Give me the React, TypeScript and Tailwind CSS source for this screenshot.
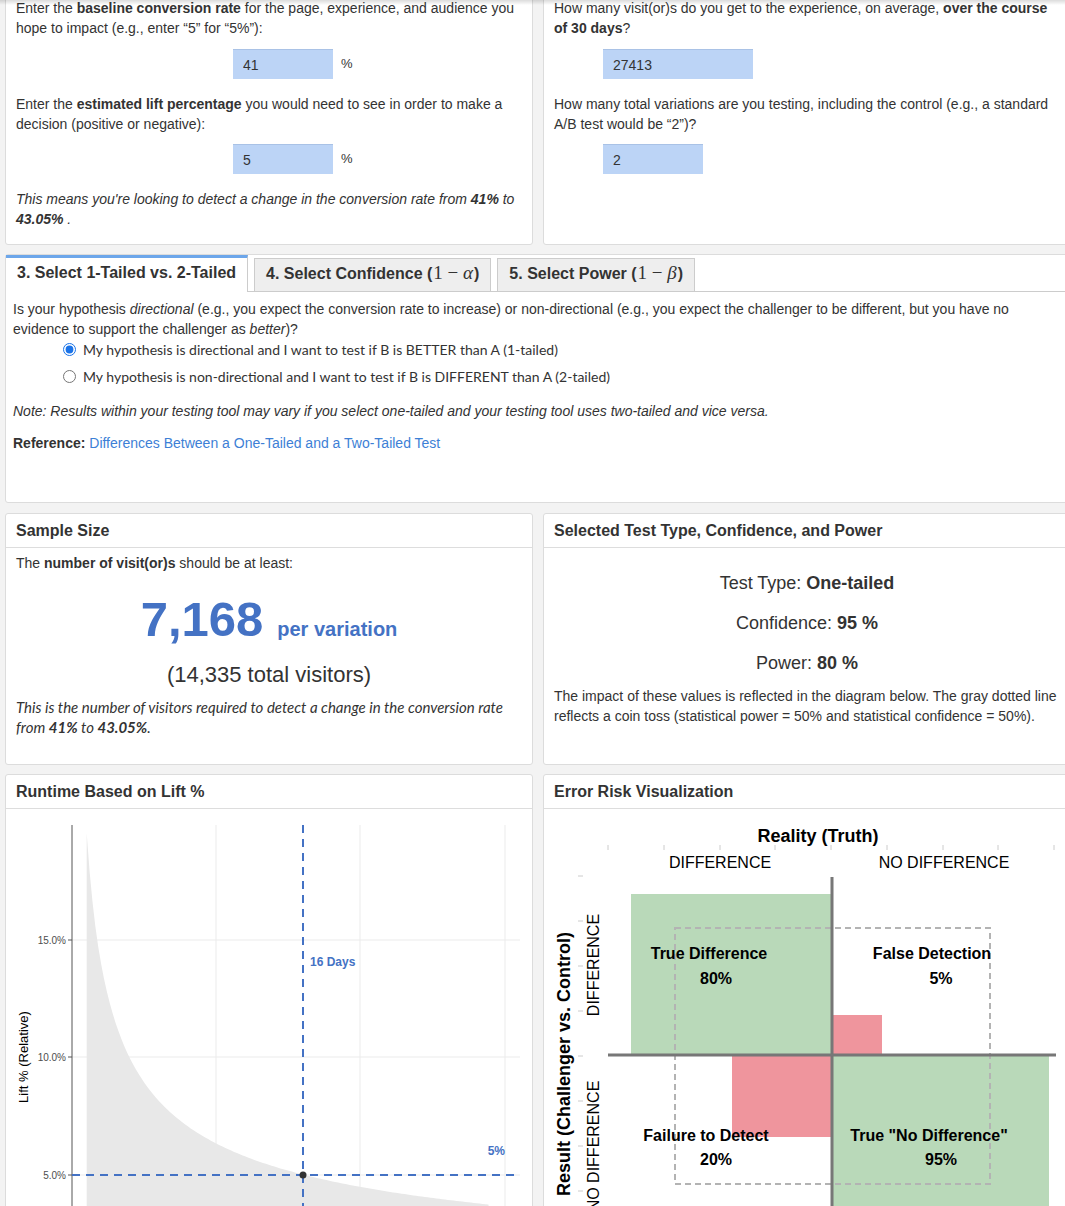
import React from 'react'

const card = 'bg-white border border-[#dcdcdc] rounded-[3px]'

function Field({ value, width }: { value: string; width: string }) {
  return (
    <input
      readOnly
      value={value}
      className={`${width} h-[30px] bg-[#bcd4f6] border-t border-[#a9c2e6] px-[10px] text-[14px] text-[#333] outline-none`}
    />
  )
}

function Header({ children }: { children: React.ReactNode }) {
  return (
    <div className="h-[34px] flex items-center px-[10px] border-b border-[#ddd] text-[16px] font-bold text-[#333]">
      {children}
    </div>
  )
}

function RuntimeChart() {
  const pts: string[] = []
  for (let d = 1.05; d <= 28.96; d += 0.2) {
    const x = 71.5 + 14.45 * d
    const y = 1292 - 23.5 * (20 / Math.sqrt(d))
    pts.push(`${x.toFixed(1)},${y.toFixed(1)}`)
  }
  const area = `M 86.7 1215 L ${pts.join(' L ')} L 490 1215 Z`
  return (
    <svg width="526" height="400" viewBox="6 809 526 400" className="block font-['Liberation_Sans']">
      {[940, 1057, 1175].map((y) => (
        <line key={y} x1="72" x2="520" y1={y} y2={y} stroke="#ebebeb" strokeWidth="1" />
      ))}
      {[216, 360, 505].map((x) => (
        <line key={x} x1={x} x2={x} y1="825" y2="1215" stroke="#ebebeb" strokeWidth="1" />
      ))}
      <path d={area} fill="#e8e8e8" />
      <line x1="72" x2="72" y1="825" y2="1215" stroke="#555" strokeWidth="1" />
      {[
        [940, '15.0%'],
        [1057, '10.0%'],
        [1175, '5.0%'],
      ].map(([y, t]) => (
        <g key={t as string}>
          <line x1="68" x2="72" y1={y} y2={y} stroke="#555" strokeWidth="1" />
          <text x="66" y={(y as number) + 3.5} fontSize="10" fill="#4d4d4d" textAnchor="end">
            {t}
          </text>
        </g>
      ))}
      <line x1="303" x2="303" y1="825" y2="1215" stroke="#4472c4" strokeWidth="2" strokeDasharray="8 6" />
      <line x1="72" x2="520" y1="1175" y2="1175" stroke="#4472c4" strokeWidth="2" strokeDasharray="8 6" />
      <circle cx="303" cy="1175" r="3.5" fill="#333" />
      <text x="310" y="966" fontSize="12" fontWeight="bold" fill="#4472c4">
        16 Days
      </text>
      <text x="505" y="1155" fontSize="12" fontWeight="bold" fill="#4472c4" textAnchor="end">
        5%
      </text>
      <text x="25" y="1057" fontSize="13" fill="#000" textAnchor="middle" dominantBaseline="middle" transform="rotate(-90 25 1057)">
        Lift % (Relative)
      </text>
    </svg>
  )
}

function ErrorChart() {
  const topTicks = [608, 664, 720, 775, 831, 887, 943, 998, 1054]
  const leftTicks = [876, 921, 966, 1011, 1056, 1101, 1146, 1191]
  return (
    <svg width="526" height="400" viewBox="544 809 526 400" className="block font-['Liberation_Sans']">
      {topTicks.map((x) => (
        <line key={x} x1={x} x2={x} y1="845" y2="850" stroke="#ccc" strokeWidth="1" />
      ))}
      {leftTicks.map((y) => (
        <line key={y} x1="578" x2="583" y1={y} y2={y} stroke="#ccc" strokeWidth="1" />
      ))}
      <text x="818" y="842" fontSize="18" fontWeight="bold" fill="#000" textAnchor="middle">
        Reality (Truth)
      </text>
      <text x="720" y="868" fontSize="16" fill="#000" textAnchor="middle">
        DIFFERENCE
      </text>
      <text x="944" y="868" fontSize="16" fill="#000" textAnchor="middle">
        NO DIFFERENCE
      </text>
      <rect x="631" y="894" width="201" height="161" fill="#b9d9b9" />
      <rect x="832" y="1055" width="217" height="160" fill="#b9d9b9" />
      <rect x="832" y="1015" width="50" height="40" fill="#ef959d" />
      <rect x="732" y="1055" width="100" height="82" fill="#ef959d" />
      <rect x="675" y="928" width="315" height="256" fill="none" stroke="#b3b3b3" strokeWidth="2" strokeDasharray="6 4" />
      <line x1="832" x2="832" y1="877" y2="1215" stroke="#777" strokeWidth="3" />
      <line x1="608" x2="1056" y1="1055" y2="1055" stroke="#777" strokeWidth="3" />
      <g fontSize="16" fontWeight="bold" fill="#000" textAnchor="middle">
        <text x="709" y="959">True Difference</text>
        <text x="716" y="984">80%</text>
        <text x="932" y="959">False Detection</text>
        <text x="941" y="984">5%</text>
        <text x="706" y="1141">Failure to Detect</text>
        <text x="716" y="1165">20%</text>
        <text x="929" y="1141">True "No Difference"</text>
        <text x="941" y="1165">95%</text>
      </g>
      <text x="565" y="1064" fontSize="18" fontWeight="bold" fill="#000" textAnchor="middle" dominantBaseline="middle" transform="rotate(-90 565 1064)">
        Result (Challenger vs. Control)
      </text>
      <text x="595" y="965" fontSize="16" fill="#000" textAnchor="middle" dominantBaseline="middle" transform="rotate(-90 595 965)">
        DIFFERENCE
      </text>
      <text x="595" y="1146" fontSize="16" fill="#000" textAnchor="middle" dominantBaseline="middle" transform="rotate(-90 595 1146)">
        NO DIFFERENCE
      </text>
    </svg>
  )
}

export default function App() {
  return (
    <div className="relative w-[1065px] h-[1206px] overflow-hidden bg-[#f3f3f3] font-['Liberation_Sans',Arial,sans-serif] text-[#333]">
      <div className="w-[1076px] px-[5px] -mt-[13px] grid grid-cols-[528px_528px] gap-x-[10px]">
        {/* inputs */}
        <div className={`${card} px-[10px] pt-[10px] pb-[15px] text-[14px] leading-[20px]`}>
          <p>
            Enter the <b>baseline conversion rate</b> for the page, experience, and audience you hope to impact (e.g., enter “5” for “5%”):
          </p>
          <div className="mt-[11px] ml-[217px] flex items-center gap-[8px]">
            <Field value="41" width="w-[100px]" />
            <span className="text-[13px]">%</span>
          </div>
          <p className="mt-[15px]">
            Enter the <b>estimated lift percentage</b> you would need to see in order to make a decision (positive or negative):
          </p>
          <div className="mt-[10px] ml-[217px] flex items-center gap-[8px]">
            <Field value="5" width="w-[100px]" />
            <span className="text-[13px]">%</span>
          </div>
          <p className="mt-[15px] italic">
            This means you're looking to detect a change in the conversion rate from <b>41%</b> to <b>43.05%</b> .
          </p>
        </div>
        <div className={`${card} px-[10px] pt-[10px] pb-[15px] text-[14px] leading-[20px]`}>
          <p>
            How many visit(or)s do you get to the experience, on average, <b>over the course of 30 days</b>?
          </p>
          <div className="mt-[11px] ml-[49px]">
            <Field value="27413" width="w-[150px]" />
          </div>
          <p className="mt-[15px]">
            How many total variations are you testing, including the control (e.g., a standard A/B test would be “2”)?
          </p>
          <div className="mt-[10px] ml-[49px]">
            <Field value="2" width="w-[100px]" />
          </div>
        </div>

        {/* tabs */}
        <div className={`${card} col-span-2 mt-[9px] h-[249px]`}>
          <div className="flex items-end border-b border-[#ccc] h-[37px]">
            <div className="relative -mb-px h-[37px] bg-white border-t-[3px] border-t-[#6ca6ea] border-r border-r-[#ccc] px-[11px] pb-[4px] flex items-center text-[16px] font-bold">
              3. Select 1-Tailed vs. 2-Tailed
            </div>
            <div className="ml-[6px] h-[33px] bg-[#eee] border border-b-0 border-[#ccc] px-[11px] pb-[3px] flex items-center text-[16px] font-bold">
              4. Select Confidence (<span className="font-['Liberation_Serif',serif] font-normal text-[19px] mx-[1px]">1 − <i>α</i></span>)
            </div>
            <div className="ml-[6px] h-[33px] bg-[#eee] border border-b-0 border-[#ccc] px-[11px] pb-[3px] flex items-center text-[16px] font-bold">
              5. Select Power (<span className="font-['Liberation_Serif',serif] font-normal text-[19px] mx-[1px]">1 − <i>β</i></span>)
            </div>
          </div>
          <div className="px-[7px] pt-[7px] text-[14px] leading-[20px]">
            <p>
              Is your hypothesis <i>directional</i> (e.g., you expect the conversion rate to increase) or non-directional (e.g., you expect the challenger to be different, but you have no evidence to support the challenger as <i>better</i>)?
            </p>
            <div className="-mt-[3px] pl-[50px] font-['Lato',sans-serif]">
              <label className="h-[27px] flex items-center gap-[7px]">
                <input type="radio" name="tail" defaultChecked className="m-0 w-[13px] h-[13px] accent-[#1a73e8]" />
                My hypothesis is directional and I want to test if B is BETTER than A (1-tailed)
              </label>
              <label className="h-[27px] flex items-center gap-[7px]">
                <input type="radio" name="tail" className="m-0 w-[13px] h-[13px]" />
                My hypothesis is non-directional and I want to test if B is DIFFERENT than A (2-tailed)
              </label>
            </div>
            <p className="mt-[11px] italic">
              Note: Results within your testing tool may vary if you select one-tailed and your testing tool uses two-tailed and vice versa.
            </p>
            <p className="mt-[12px]">
              <b>Reference:</b> <a className="text-[#3d7fd6]">Differences Between a One-Tailed and a Two-Tailed Test</a>
            </p>
          </div>
        </div>

        {/* results */}
        <div className={`${card} mt-[10px] h-[252px]`}>
          <Header>Sample Size</Header>
          <div className="px-[10px] pt-[5px]">
            <p className="text-[14px] leading-[20px]">
              The <b>number of visit(or)s</b> should be at least:
            </p>
            <div className="mt-[22px] flex justify-center items-baseline gap-[14px] text-[#4472c4] font-bold">
              <span className="text-[49px] leading-none">7,168</span>
              <span className="text-[20px]">per variation</span>
            </div>
            <p className="mt-[16px] text-center text-[22px] leading-[30px]">(14,335 total visitors)</p>
            <p className="mt-[7px] italic font-['Lato',sans-serif] text-[15px] leading-[20px]">
              This is the number of visitors required to detect a change in the conversion rate from <b>41%</b> to <b>43.05%</b>.
            </p>
          </div>
        </div>
        <div className={`${card} mt-[10px] h-[252px]`}>
          <Header>Selected Test Type, Confidence, and Power</Header>
          <div className="px-[10px] pt-[15px]">
            <div className="h-[40px] flex items-center justify-center text-[18px]">
              Test Type:&nbsp;<b>One-tailed</b>
            </div>
            <div className="h-[40px] flex items-center justify-center text-[18px]">
              Confidence:&nbsp;<b>95 %</b>
            </div>
            <div className="h-[40px] flex items-center justify-center text-[18px]">
              Power:&nbsp;<b>80 %</b>
            </div>
            <p className="mt-[3px] text-[14px] leading-[20px]">
              The impact of these values is reflected in the diagram below. The gray dotted line reflects a coin toss (statistical power = 50% and statistical confidence = 50%).
            </p>
          </div>
        </div>

        {/* charts */}
        <div className={`${card} mt-[9px] h-[460px]`}>
          <Header>Runtime Based on Lift %</Header>
          <RuntimeChart />
        </div>
        <div className={`${card} mt-[9px] h-[460px]`}>
          <Header>Error Risk Visualization</Header>
          <ErrorChart />
        </div>
      </div>
      <div className="absolute left-0 top-0 w-full h-[5px] bg-linear-to-b from-[rgba(0,0,0,0.14)] to-transparent" />
    </div>
  )
}
